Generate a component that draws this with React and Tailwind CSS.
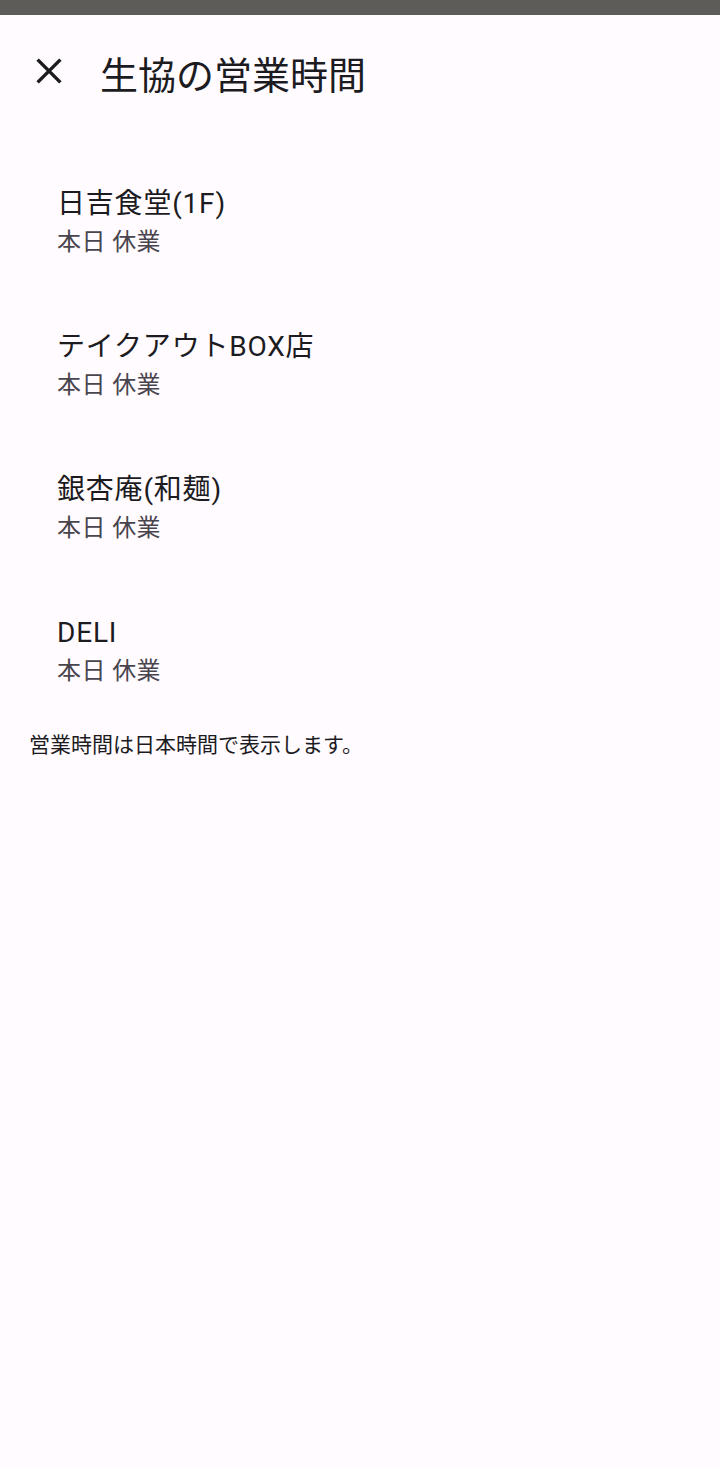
import React from "react";

const items = [
  "日吉食堂(1F)",
  "テイクアウトBOX店",
  "銀杏庵(和麺)",
  "DELI",
];

export default function App() {
  return (
    <div
      className="min-h-[1469px] w-[720px] bg-[#fffbfe] text-[#1c1b1f]"
      style={{ fontFamily: 'Roboto, "Noto Sans CJK JP", sans-serif' }}
    >
      <div className="h-[15px] bg-[#5d5c58]" />
      <div className="flex h-[112px] items-center">
        <div className="flex w-[100px] items-center pl-[28px]">
          <svg width="42" height="42" viewBox="0 0 24 24" fill="none">
            <path
              d="M5.5 5.5 L18.5 18.5 M18.5 5.5 L5.5 18.5"
              stroke="#1c1b1f"
              strokeWidth="2"
            />
          </svg>
        </div>
        <div className="text-[38px] leading-[48px] pt-[10px]">生協の営業時間</div>
      </div>
      <div className="h-[23px]" />
      {items.map((t) => (
        <div key={t} className="flex h-[143px] flex-col justify-center pl-[57px]">
          <div className="text-[28px] leading-[42px] tracking-[0.8px] text-[#1c1b1f]">{t}</div>
          <div className="text-[24px] leading-[35px] tracking-[0.4px] text-[#49454f]">本日 休業</div>
        </div>
      ))}
      <div className="mt-[9px] pl-[29px] text-[21px] leading-[28px] text-[#1c1b1f]">
        営業時間は日本時間で表示します。
      </div>
    </div>
  );
}
